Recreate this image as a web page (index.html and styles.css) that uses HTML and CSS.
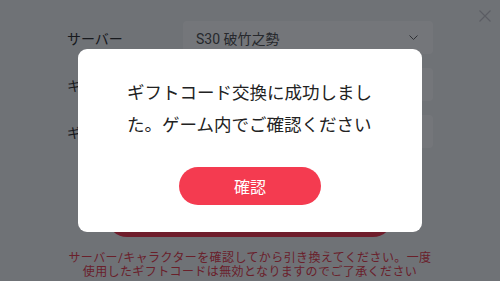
FILE: index.html
```html
<!DOCTYPE html>
<html lang="ja">
<head>
	<meta charset="UTF-8">
	<title>ギフトコード交換</title>
	<link rel="stylesheet" href="styles.css">
</head>
<body>
	<!-- Form -->
	<div class="page">
		<span class="close">
			<svg width="12" height="12" viewBox="0 0 12 12"><path d="M0.5 0.5L11.5 11.5M11.5 0.5L0.5 11.5" stroke="#c8c8cc" stroke-width="1.2" fill="none"/></svg>
		</span>
		<div class="form">
			<div class="row">
				<label class="label">サーバー</label>
				<div class="field select">
					<span>S30 破竹之勢</span>
					<svg width="9" height="5" viewBox="0 0 9 5"><path d="M0.5 0.5L4.5 4.5L8.5 0.5" stroke="#666" stroke-width="1" fill="none"/></svg>
				</div>
			</div>
			<div class="row">
				<label class="label">キャラクター</label>
				<div class="field"></div>
			</div>
			<div class="row">
				<label class="label">ギフトコード</label>
				<div class="field"></div>
			</div>
		</div>
		<button class="submit">交換</button>
		<p class="hint">サーバー/キャラクターを確認してから引き換えてください。一度<br>使用したギフトコードは無効となりますのでご了承ください</p>
	</div>

	<!-- Dialog -->
	<div class="overlay">
		<div class="dialog">
			<p class="message">ギフトコード交換に成功しました。ゲーム内でご確認ください</p>
			<button class="ok">確認</button>
		</div>
	</div>
</body>
</html>
```

FILE: styles.css
```css
body {
	margin: 0;
	background: #f4f5f7;
	font-family: Roboto, "Noto Sans CJK JP", sans-serif;
	color: #333;
}

.page {
	position: relative;
	height: 281px;
	overflow: hidden;
	padding-top: 21px;
	box-sizing: border-box;
}
.close {
	position: absolute;
	right: 9px;
	top: 10px;
	line-height: 0;
}

.form {
	display: flex;
	flex-direction: column;
	gap: 14px;
	padding-left: 67px;
}
.row {
	display: flex;
	align-items: center;
	height: 33px;
}
.label {
	width: 116px;
	font-size: 14px;
}
.field {
	width: 250px;
	height: 33px;
	background: #fff;
	border-radius: 4px;
}
.field.select {
	display: flex;
	align-items: center;
	justify-content: space-between;
	padding: 0 15px 0 13px;
	box-sizing: border-box;
	font-size: 14px;
	color: #555;
}

.submit {
	display: block;
	margin: 49px auto 0;
	width: 286px;
	height: 40px;
	border: none;
	border-radius: 20px;
	background: #f43b50;
	color: #fff;
	font: 16px Roboto, "Noto Sans CJK JP", sans-serif;
}
.hint {
	margin: 14px 0 0;
	text-align: center;
	font-size: 12px;
	letter-spacing: 0.4px;
	line-height: 14px;
	color: #e8414f;
}

.overlay {
	position: fixed;
	left: 0;
	right: 0;
	top: 0;
	bottom: 0;
	background: rgba(2, 6, 13, 0.55);
	display: flex;
	align-items: center;
	justify-content: center;
}
.dialog {
	width: 344px;
	height: 183px;
	background: #fff;
	border-radius: 9px;
	padding: 28px 45px 0 49px;
	box-sizing: border-box;
}
.message {
	margin: 0;
	font-size: 17.5px;
	line-height: 32px;
	color: #222;
}
.ok {
	display: block;
	margin: 26px 0 0 52px;
	width: 142px;
	height: 38px;
	border: none;
	border-radius: 19px;
	background: #f43b50;
	color: #fff;
	font: 16px Roboto, "Noto Sans CJK JP", sans-serif;
}
```
